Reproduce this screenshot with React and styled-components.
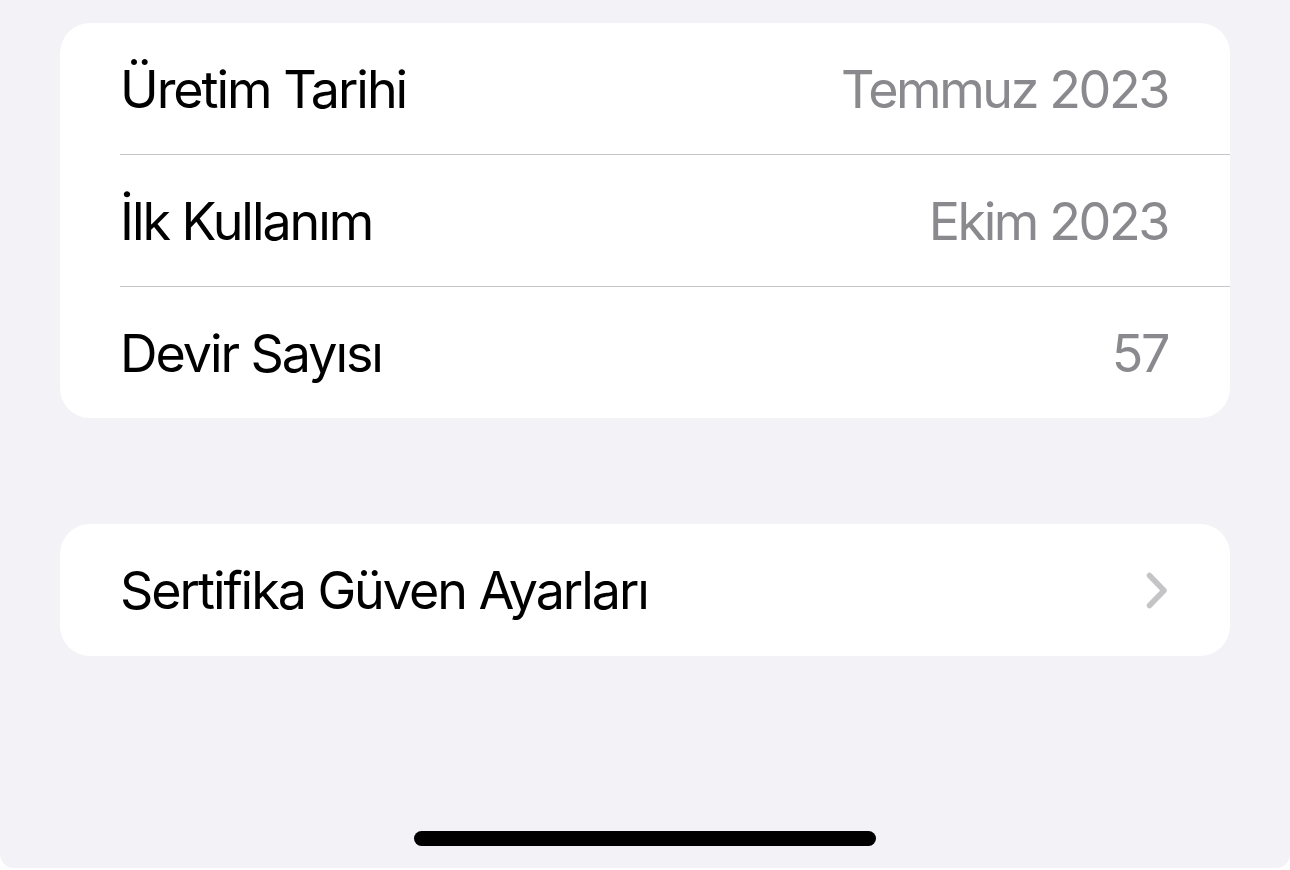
import React from "react";
import styled, { createGlobalStyle } from "styled-components";

const Global = createGlobalStyle`
  html, body { margin: 0; padding: 0; background: #ffffff; }
  body { font-family: Inter, "Noto Sans", "Liberation Sans", sans-serif; -webkit-font-smoothing: antialiased; }
`;

const Screen = styled.div`
  width: 1290px;
  height: 868px;
  box-sizing: border-box;
  background: #f2f2f7;
  border-radius: 0 0 14px 14px;
  padding: 23px 60px 22px;
  display: flex;
  flex-direction: column;
  overflow: hidden;
`;

const Card = styled.div`
  background: #ffffff;
  border-radius: 30px;
  overflow: hidden;
  margin-bottom: ${(p) => p.$gap || 0}px;
`;

const Row = styled.div`
  height: ${(p) => p.$h || 131}px;
  margin-left: 60px;
  padding-right: 62px;
  display: flex;
  align-items: center;
  justify-content: space-between;
  border-bottom: ${(p) => (p.$last ? "none" : "1px solid #c6c6c8")};
`;

const Label = styled.span`
  font-size: 52px;
  color: #000000;
  letter-spacing: -2.05px;
  margin-top: 1px;
`;

const Value = styled.span`
  font-size: 52px;
  color: #8a8a8e;
  letter-spacing: -2.4px;
  margin-top: 1px;
`;

const Chevron = styled.svg`
  width: 22px;
  height: 37px;
  margin-top: 1px;
`;

const HomeIndicator = styled.div`
  margin-top: auto;
  align-self: center;
  width: 462px;
  height: 15px;
  border-radius: 8px;
  background: #000000;
`;

const rows = [
  { label: "Üretim Tarihi", value: "Temmuz 2023" },
  { label: "İlk Kullanım", value: "Ekim 2023" },
  { label: "Devir Sayısı", value: "57" },
];

export default function App() {
  return (
    <>
      <Global />
      <Screen>
        <Card $gap={106}>
          {rows.map((r, i) => (
            <Row key={r.label} $last={i === rows.length - 1}>
              <Label>{r.label}</Label>
              <Value>{r.value}</Value>
            </Row>
          ))}
        </Card>
        <Card>
          <Row $last $h={132}>
            <Label>Sertifika Güven Ayarları</Label>
            <Chevron viewBox="0 0 22 37" fill="none">
              <path
                d="M3.5 3.5 L18 18.5 L3.5 33.5"
                stroke="#c4c4c7"
                strokeWidth="5.5"
                strokeLinecap="round"
                strokeLinejoin="round"
              />
            </Chevron>
          </Row>
        </Card>
        <HomeIndicator />
      </Screen>
    </>
  );
}
